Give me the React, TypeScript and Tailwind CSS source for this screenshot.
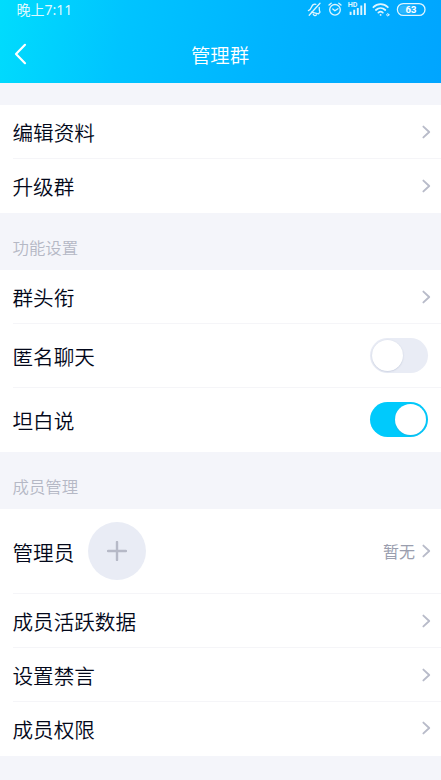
import { ReactNode } from "react";
import clsx from "clsx";

function Chevron() {
  return (
    <svg className="block h-4 w-2.5 shrink-0" viewBox="0 0 10 16" fill="none">
      <path
        d="M2.4 2.6 8.2 8l-5.8 5.4"
        stroke="#b8bbc9"
        strokeWidth="1.9"
        strokeLinecap="round"
        strokeLinejoin="round"
      />
    </svg>
  );
}

function Toggle({ on }: { on?: boolean }) {
  return (
    <div
      className={clsx(
        "flex h-[35px] w-[58.5px] items-center rounded-full px-[2.5px]",
        on ? "justify-end bg-[#00cafc]" : "justify-start bg-[#e9ecf5]"
      )}
    >
      <div className="size-[31px] rounded-full bg-white shadow-[0_0.5px_1.5px_rgba(90,110,150,0.3)]" />
    </div>
  );
}

type RowProps = {
  label: string;
  height?: string;
  last?: boolean;
  extra?: ReactNode;
  children?: ReactNode;
};

function Row({ label, height = "h-[54px]", last, extra, children }: RowProps) {
  return (
    <li className="bg-white pl-[12.5px]">
      <div
        className={clsx(
          "flex items-center justify-between border-b",
          height,
          last ? "border-transparent" : "border-[#f5f5f8]"
        )}
      >
        <div className="flex items-center gap-3.5">
          <span className="pt-0.5 text-[20.6px] leading-none text-[#03081a]">{label}</span>
          {extra}
        </div>
        {children ?? (
          <div className="pr-2.5">
            <Chevron />
          </div>
        )}
      </div>
    </li>
  );
}

function SectionTitle({ children }: { children: ReactNode }) {
  return (
    <h2 className="flex h-[57px] items-center pl-[12.5px] pt-3 text-[16.4px] font-[350] leading-none text-[#b5b8c5]">
      {children}
    </h2>
  );
}

function StatusIcons() {
  return (
    <svg
      className="h-5 w-[120px]"
      viewBox="0 0 120 20"
      fill="none"
      stroke="#dff5ff"
      strokeWidth="1.3"
      strokeLinecap="round"
      strokeLinejoin="round"
    >
      {/* muted bell, tilted to the right */}
      <g transform="translate(-.4 0)">
        <path d="M2.8 10.6c1.7-.6 2.3-1.6 3-3.4.9-2.3 2.4-3.4 4.4-2.9M13.6 7.4c.2 1.7-.2 2.9.8 4.7l-1.5 1.7-7-1.7M7.6 14.1c.5 1.6 2.3 1.9 3.2.7" />
        <path d="M14.4 3.2 3.6 15.2" />
      </g>
      {/* alarm clock */}
      <circle cx="29" cy="9.8" r="5.3" />
      <path d="m23 5 2.2-1.8M35 5l-2.2-1.8M26.8 9l2.1 1.8 3-2.1" />
      {/* signal */}
      <g strokeWidth="1.9" strokeLinecap="butt">
        <path d="M44.6 15v-3.2M48.2 15v-5.2M51.8 15V8M55.3 15V5.5M58.9 15V3.2" />
      </g>
      <text
        x="41.8"
        y="7.2"
        fill="#dff5ff"
        stroke="none"
        fontSize="7.2"
        fontWeight="700"
        fontFamily="Roboto, sans-serif"
      >
        HD
      </text>
      {/* wifi */}
      <g strokeWidth="1.8">
        <path d="M67.4 7.2c4.2-4 10.2-4 14.4 0M69.9 10c2.8-2.6 6.6-2.6 9.4 0M72.4 12.6c1.3-1.1 3.1-1.1 4.4 0" />
        <path d="M74.6 14.8v.1" />
      </g>
      <circle cx="81.8" cy="14.8" r="1.1" strokeWidth="1" />
      {/* battery */}
      <rect x="91.4" y="3.6" width="27.6" height="11.8" rx="5.9" />
      <rect x="93.2" y="5.4" width="16" height="8.2" rx="3.5" fill="#7fd2ff" fillOpacity=".35" stroke="none" />
      <text
        x="105"
        y="13"
        fill="#fff"
        stroke="none"
        textAnchor="middle"
        fontSize="9.5"
        fontWeight="700"
        fontFamily="Roboto, sans-serif"
      >
        63
      </text>
    </svg>
  );
}

export default function App() {
  return (
    <div className="h-[780px] w-[441px] overflow-hidden bg-[#f4f5fa] font-['Noto_Sans_CJK_SC',sans-serif] font-[350]">
      <header className="h-[82.5px] bg-[linear-gradient(100deg,#00dcfd_0%,#00c4ff_28%,#00b4ff_60%,#00a5ff_100%)] text-white">
        <div className="flex h-5 items-center justify-between pl-[16.5px] pr-[15px]">
          <span className="font-['Noto_Sans','Noto_Sans_CJK_SC',sans-serif] text-[14px] font-normal leading-none text-[#dff8ff]">
            晚上7:11
          </span>
          <StatusIcons />
        </div>
        <div className="grid h-[68px] grid-cols-[1fr_auto_1fr] items-center pl-3.5">
          <svg className="h-[22px] w-3.5" viewBox="0 0 14 22" fill="none">
            <path
              d="M11 1.8 2 11l9 9.2"
              stroke="#fff"
              strokeWidth="2.2"
              strokeLinecap="round"
              strokeLinejoin="round"
            />
          </svg>
          <h1 className="pr-[15px] pt-0.5 text-[19.4px] font-[350] leading-none">管理群</h1>
        </div>
      </header>

      <ul className="mt-[22.5px]">
        <Row label="编辑资料" />
        <Row label="升级群" last />
      </ul>

      <SectionTitle>功能设置</SectionTitle>
      <ul>
        <Row label="群头衔" />
        <Row label="匿名聊天" height="h-16">
          <div className="pr-[13px]">
            <Toggle />
          </div>
        </Row>
        <Row label="坦白说" height="h-16" last>
          <div className="pr-[13px]">
            <Toggle on />
          </div>
        </Row>
      </ul>

      <SectionTitle>成员管理</SectionTitle>
      <ul>
        <Row
          label="管理员"
          height="h-[85px]"
          extra={
            <div className="flex size-[57.5px] items-center justify-center rounded-full bg-[#e9ecf5]">
              <svg className="size-5" viewBox="0 0 20 20" fill="none">
                <path d="M10 1v18M1 10h18" stroke="#b6b9c7" strokeWidth="2.4" strokeLinecap="round" />
              </svg>
            </div>
          }
        >
          <div className="flex items-center gap-1.5 pr-2.5">
            <span className="text-[16px] font-normal leading-none text-[#9a9eae]">暂无</span>
            <Chevron />
          </div>
        </Row>
        <Row label="成员活跃数据" />
        <Row label="设置禁言" />
        <Row label="成员权限" height="h-[53.5px]" last />
      </ul>
    </div>
  );
}
